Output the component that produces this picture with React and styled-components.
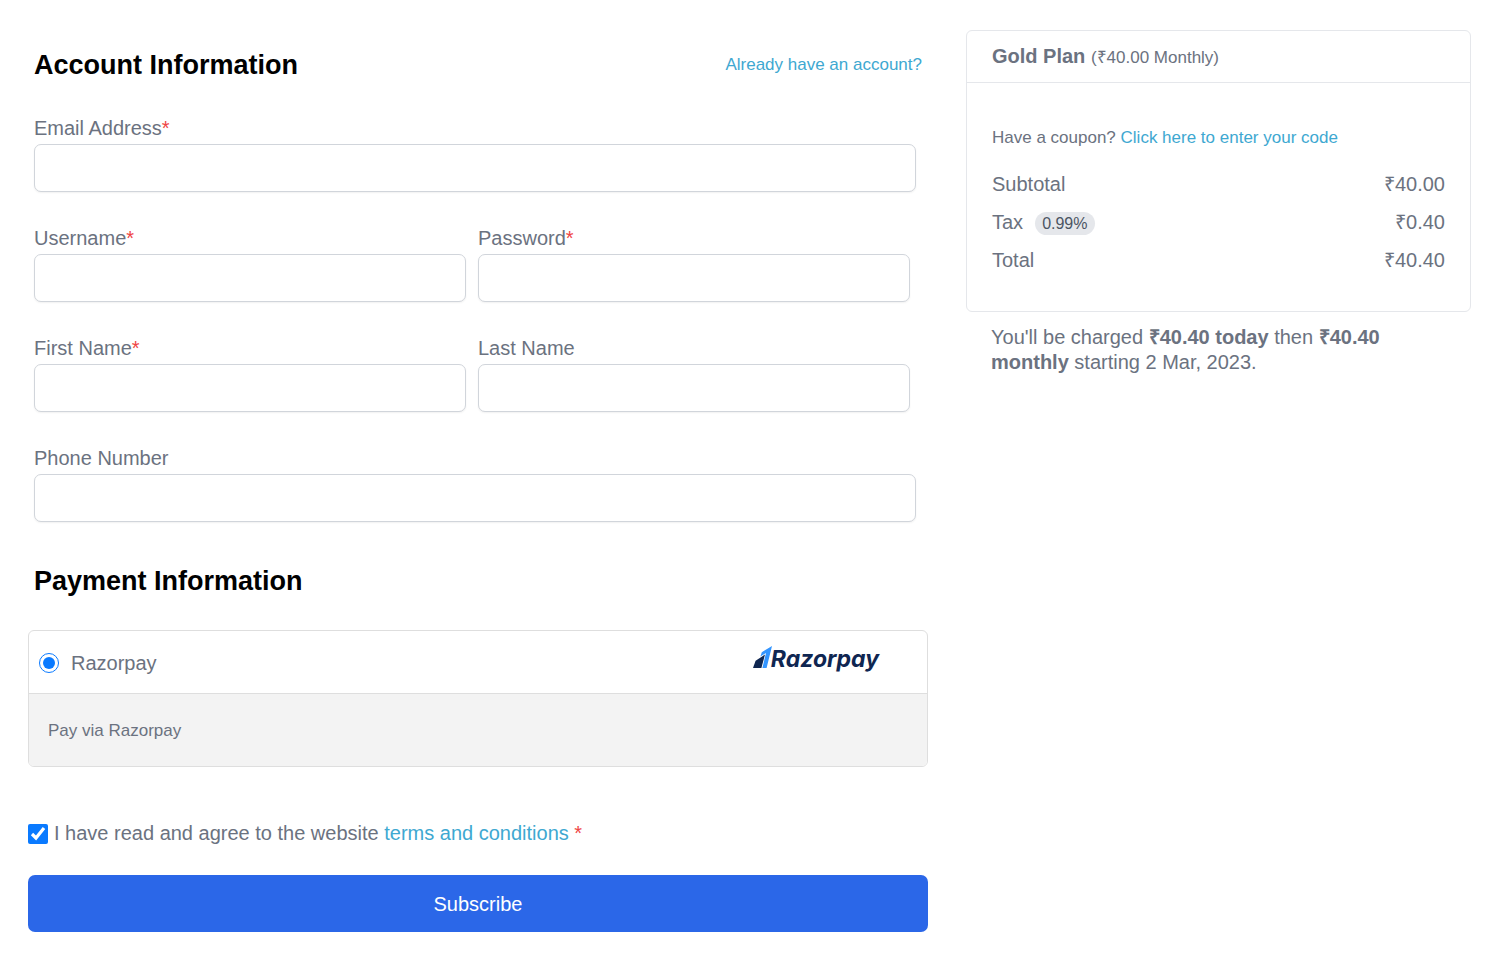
import { useState } from 'react'
import styled, { createGlobalStyle } from 'styled-components'

const GlobalStyle = createGlobalStyle`
  * {
    box-sizing: border-box;
  }

  body {
    margin: 0;
    background: #ffffff;
    color: #6b7280;
    font-family: "Liberation Sans", Arial, sans-serif;
    font-size: 20px;
    line-height: 24px;
  }
`

const Page = styled.main`
  display: grid;
  grid-template-columns: minmax(0, 900fr) minmax(0, 505fr);
  align-items: start;
  column-gap: 38px;
  padding: 30px 29px 26px 28px;

  @media (max-width: 900px) {
    grid-template-columns: minmax(0, 1fr);
    row-gap: 32px;
  }
`

const Form = styled.form`
  display: flex;
  flex-direction: column;
  padding-top: 19px;
`

const SectionHead = styled.div`
  display: flex;
  align-items: center;
  justify-content: space-between;
  padding: 0 6px;
`

const Title = styled.h2`
  margin: 0;
  color: #000000;
  font-size: 27px;
  line-height: 32px;
`

const Link = styled.a`
  color: #3ea8d1;
  text-decoration: none;
  font-size: ${({ $small }) => ($small ? '17px' : 'inherit')};

  &:hover {
    text-decoration: underline;
  }
`

const Fields = styled.div`
  display: grid;
  grid-template-columns: 1fr 1fr;
  row-gap: 34px;
  padding: 35px 6px 43px;
`

const FieldBox = styled.div`
  display: flex;
  flex-direction: column;
  gap: 4px;
  grid-column: ${({ $full }) => ($full ? '1 / -1' : 'auto')};
  padding-right: ${({ $full }) => ($full ? '6px' : '12px')};
`

const Input = styled.input`
  width: 100%;
  height: 48px;
  padding: 8px 12px;
  border: 1px solid #d1d5db;
  border-radius: 7px;
  background: #ffffff;
  color: #374151;
  font: inherit;
  box-shadow: 0 1px 2px rgba(0, 0, 0, 0.06);
`

const Star = styled.span`
  color: #ef4444;
`

const Gateway = styled.div`
  margin-top: 33px;
  border: 1px solid #dedede;
  border-radius: 6px;
  overflow: hidden;
`

const GatewayHead = styled.label`
  display: flex;
  align-items: center;
  height: 63px;
  padding: 1px 48px 0 10px;
  border-bottom: 1px solid #dedede;
`

const Radio = styled.input`
  width: 20px;
  height: 20px;
  margin: 0 12px 0 0;
  accent-color: #0a7aff;
`

const GatewayBody = styled.div`
  padding: 25px 19px 23px;
  background: #f3f3f3;
  font-size: 17px;
`

const Brand = styled.span`
  display: flex;
  align-items: center;
  margin-left: auto;
  padding-bottom: 8px;
  color: #0f2651;
  font-family: Inter, sans-serif;
  font-size: 23px;
  font-style: italic;
  font-weight: 700;
`

const Mark = styled.svg`
  width: 20px;
  height: 23px;
  margin: 0 -2px 3px 0;
`

const Terms = styled.div`
  display: flex;
  align-items: center;
  gap: 6px;
  margin: 54px 0 30px;
`

const Checkbox = styled.input`
  width: 20px;
  height: 20px;
  margin: 2px 0 0;
  accent-color: #0a7aff;
`

const Submit = styled.button`
  height: 57px;
  border: 0;
  border-radius: 7px;
  background: #2b67e8;
  color: #ffffff;
  font: inherit;
  cursor: pointer;
`

const Card = styled.section`
  border: 1px solid #e5e7eb;
  border-radius: 6px;
`

const CardHead = styled.header`
  padding: 13px 25px 12px;
  border-bottom: 1px solid #e5e7eb;
`

const Small = styled.span`
  font-size: 17px;
`

const CardBody = styled.div`
  padding: 43px 25px 32px;
`

const Coupon = styled.p`
  margin: 0 0 15px;
  font-size: 17px;
`

const Totals = styled.table`
  width: 100%;
  border-collapse: collapse;

  th,
  td {
    height: 38px;
    padding: 0;
    font-weight: 400;
    text-align: left;
  }

  td {
    text-align: right;
  }
`

const Badge = styled.span`
  display: inline-block;
  margin-left: 12px;
  padding: 0 7px;
  border-radius: 12px;
  background: #e5e7eb;
  color: #4b5563;
  font-size: 16px;
  line-height: 23px;
`

const Note = styled.p`
  margin: 13px 25px 0;
  line-height: 25px;
`

function Field({ id, label, type = 'text', required, full }) {
  return (
    <FieldBox $full={full}>
      <label htmlFor={id}>
        {label}
        {required && <Star>*</Star>}
      </label>
      <Input id={id} name={id} type={type} required={required} />
    </FieldBox>
  )
}

function RazorpayLogo() {
  return (
    <Brand>
      <Mark viewBox="0 0 20 23" aria-hidden="true">
        <path d="M0 22 L2.6 14.8 L12 8.6 L8.4 22 Z" fill="#0f2651" />
        <path d="M7.4 10.4 L8.8 6.2 L19 0 L13.6 22 L9.4 22 L13 7 Z" fill="#3395ff" />
      </Mark>
      Razorpay
    </Brand>
  )
}

export default function App() {
  const [agreed, setAgreed] = useState(true)

  return (
    <>
      <GlobalStyle />
      <Page>
        <Form onSubmit={(e) => e.preventDefault()}>
          <SectionHead>
            <Title>Account Information</Title>
            <Link href="#login" $small>Already have an account?</Link>
          </SectionHead>

          <Fields>
            <Field id="email" label="Email Address" type="email" required full />
            <Field id="username" label="Username" required />
            <Field id="password" label="Password" type="password" required />
            <Field id="first_name" label="First Name" required />
            <Field id="last_name" label="Last Name" />
            <Field id="phone" label="Phone Number" type="tel" full />
          </Fields>

          <SectionHead>
            <Title>Payment Information</Title>
          </SectionHead>

          <Gateway>
            <GatewayHead>
              <Radio type="radio" name="gateway" value="razorpay" defaultChecked />
              Razorpay
              <RazorpayLogo />
            </GatewayHead>
            <GatewayBody>Pay via Razorpay</GatewayBody>
          </Gateway>

          <Terms>
            <Checkbox
              id="terms"
              type="checkbox"
              checked={agreed}
              onChange={(e) => setAgreed(e.target.checked)}
            />
            <label htmlFor="terms">
              I have read and agree to the website{' '}
              <Link href="#terms">terms and conditions</Link> <Star>*</Star>
            </label>
          </Terms>

          <Submit type="submit">Subscribe</Submit>
        </Form>

        <aside>
          <Card>
            <CardHead>
              <strong>Gold Plan</strong> <Small>(₹40.00 Monthly)</Small>
            </CardHead>
            <CardBody>
              <Coupon>
                Have a coupon? <Link href="#coupon">Click here to enter your code</Link>
              </Coupon>
              <Totals>
                <tbody>
                  <tr>
                    <th scope="row">Subtotal</th>
                    <td>₹40.00</td>
                  </tr>
                  <tr>
                    <th scope="row">
                      Tax<Badge>0.99%</Badge>
                    </th>
                    <td>₹0.40</td>
                  </tr>
                  <tr>
                    <th scope="row">Total</th>
                    <td>₹40.40</td>
                  </tr>
                </tbody>
              </Totals>
            </CardBody>
          </Card>
          <Note>
            You'll be charged <strong>₹40.40 today</strong> then{' '}
            <strong>₹40.40 monthly</strong> starting 2 Mar, 2023.
          </Note>
        </aside>
      </Page>
    </>
  )
}
